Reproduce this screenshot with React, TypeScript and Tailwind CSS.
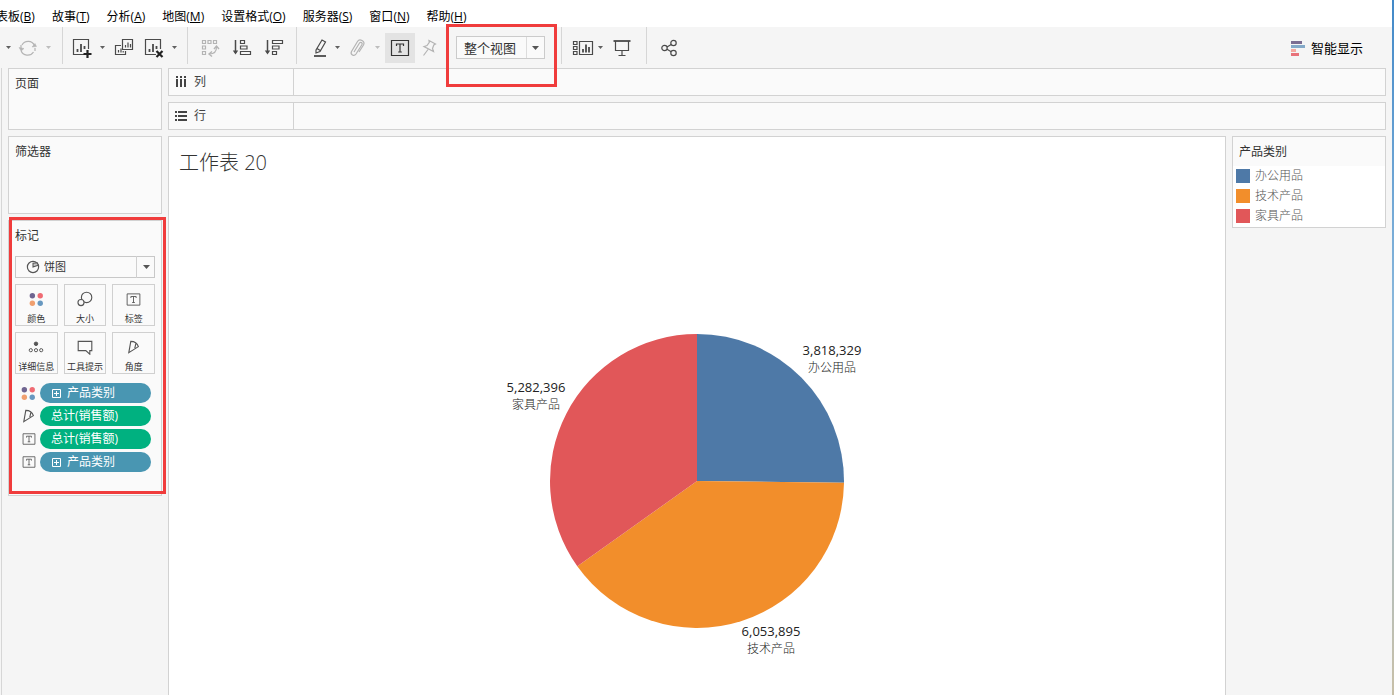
import type { ReactNode } from "react";

const menus = [
  { label: "表板", hotkey: "B" },
  { label: "故事", hotkey: "T" },
  { label: "分析", hotkey: "A" },
  { label: "地图", hotkey: "M" },
  { label: "设置格式", hotkey: "O" },
  { label: "服务器", hotkey: "S" },
  { label: "窗口", hotkey: "N" },
  { label: "帮助", hotkey: "H" },
];

const slices = [
  { name: "办公用品", value: 3818329, color: "#4e79a7", labelX: 352, labelY: 25 },
  { name: "技术产品", value: 6053895, color: "#f28e2b", labelX: 291, labelY: 306 },
  { name: "家具产品", value: 5282396, color: "#e15759", labelX: 56, labelY: 62 },
];

const CENTER_X = 217;
const CENTER_Y = 151;
const RADIUS = 147;

interface IconProps {
  children: ReactNode;
  className?: string;
}

function Icon({ children, className = "w-5 h-5" }: IconProps) {
  return (
    <svg
      viewBox="0 0 20 20"
      fill="none"
      stroke="currentColor"
      strokeWidth="1.2"
      className={`shrink-0 ${className}`}
      aria-hidden="true"
    >
      {children}
    </svg>
  );
}

interface ToolButtonProps {
  label: string;
  children: ReactNode;
  faded?: boolean;
}

function ToolButton({ label, children, faded = false }: ToolButtonProps) {
  return (
    <button
      type="button"
      aria-label={label}
      className={`block ${faded ? "text-[#b4b4b4]" : "text-[#4a4a4a]"}`}
    >
      <Icon>{children}</Icon>
    </button>
  );
}

function Caret({ label, faded = false }: { label: string; faded?: boolean }) {
  return (
    <button
      type="button"
      aria-label={label}
      className={`flex w-3 h-5 items-center justify-center ${faded ? "text-[#bdbdbd]" : "text-[#606060]"}`}
    >
      <CaretGlyph className="w-[5px] h-[3px]" />
    </button>
  );
}

function CaretGlyph({ className }: { className: string }) {
  return (
    <svg viewBox="0 0 8 4" fill="currentColor" preserveAspectRatio="none" className={className} aria-hidden="true">
      <path d="M0 0h8L4 4z" />
    </svg>
  );
}

function Divider() {
  return <div className="w-px h-[37px] self-start bg-[#d6d6d6]" />;
}

function BoxedT({ className }: { className?: string }) {
  return (
    <Icon className={className}>
      <path d="M1.5 2.5h17v15h-17z" />
      <path d="M6.5 8V6h7v2M10 6v8M8.2 14h3.6" />
    </Icon>
  );
}

function ColorDots({ className }: { className?: string }) {
  return (
    <Icon className={className}>
      <g stroke="none">
        <circle cx="4.500" cy="5" r="3.600" fill="#6f6591" />
        <circle cx="15" cy="5" r="3.600" fill="#ef6b73" />
        <circle cx="4.500" cy="15" r="3.600" fill="#f0a070" />
        <circle cx="15" cy="15" r="3.600" fill="#6798c0" />
      </g>
    </Icon>
  );
}

function AngleMark({ className }: { className?: string }) {
  return (
    <Icon className={className}>
      <path d="M6 3C10 3 14 5 15.500 9.500L3.500 17ZM12.500 5l-1.500 6.500" strokeWidth="1.400" />
    </Icon>
  );
}

function MenuBar() {
  return (
    <nav className="flex h-[27px] items-end gap-[17px] overflow-hidden bg-white text-xs leading-5 text-black">
      {menus.map((menu, i) => (
        <button key={menu.hotkey} type="button" className={`shrink-0 ${i === 0 ? "-ml-1" : ""}`}>
          {menu.label}(<u>{menu.hotkey}</u>)
        </button>
      ))}
    </nav>
  );
}

function Toolbar() {
  return (
    <div className="flex h-[41px] items-center">
      <div className="flex items-center gap-1 pl-0.5 pr-2">
        <Caret label="更多" />
        <ToolButton label="刷新" faded>
          <path d="M4 7a7 7 0 0 1 12.5.5M17 10v3M15.5 14A7 7 0 0 1 3 12.500M3 10V7" />
          <path d="M1 9.500 3.200 13 6 10.500zM14 9l4.500-.5-1.500-3z" fill="currentColor" strokeWidth=".5" />
        </ToolButton>
        <Caret label="刷新选项" faded />
      </div>
      <Divider />
      <div className="flex items-center pl-[9px] pr-[7px]">
        <ToolButton label="新建工作表">
          <path d="M12 16.500H1.500v-15h15V11" />
          <path d="M5.500 14v-3M9 14V6M12.500 11V8" strokeWidth="1.800" />
          <path d="M15.500 12v8M11.500 16h8" strokeWidth="2.200" stroke="#222" />
        </ToolButton>
        <div className="pl-1 pr-1.5">
          <Caret label="新建选项" />
        </div>
        <ToolButton label="复制">
          <path d="M8.500 1.500h10v10h-10zM7 7.500H1.500v9h10V13" />
          <path d="M11.500 9.500V7M14 9.500V4.500M16.500 9.500V6M4.500 14.500V12M7 14.500V10.500M9.200 14.500V13" />
        </ToolButton>
        <div className="pl-2.5 pr-1">
          <ToolButton label="清除工作表">
            <path d="M12 16.500H1.500v-15h15V11" />
            <path d="M5.500 14v-3M9 14V6M12.500 11V8" strokeWidth="1.800" />
            <path d="m12.500 13 6 6M18.500 13l-6 6" strokeWidth="2.200" stroke="#222" />
          </ToolButton>
        </div>
        <Caret label="清除选项" />
      </div>
      <Divider />
      <div className="flex items-center gap-3 px-3">
        <ToolButton label="交换行和列" faded>
          <path d="M2.500 2.500h3v3h-3zM8 2.500h3v3H8zM13.500 2.500h3v3h-3zM2.500 8h3v3h-3zM2.500 13.500h3v3h-3z" />
          <path d="M16.500 9c0 4.500-2.500 7-7 7" />
          <path d="m14 11 2.500-3 2.500 3M12 13.500 9 16l3 2.500" strokeWidth="1.400" />
        </ToolButton>
        <ToolButton label="升序排序">
          <path d="M3.500 2v13" strokeWidth="1.500" />
          <path d="M.800 12.500h5.400L3.500 16.500z" fill="currentColor" stroke="none" />
          <path d="M8.500 2.500h4v3h-4zM8.500 8h6.500v3H8.500zM8.500 13.500h10v3h-10z" />
        </ToolButton>
        <ToolButton label="降序排序">
          <path d="M3.500 2v13" strokeWidth="1.500" />
          <path d="M.800 12.500h5.400L3.500 16.500z" fill="currentColor" stroke="none" />
          <path d="M8.500 2.500h10v3h-10zM8.500 8H15v3H8.500zM8.500 13.500h4v3h-4z" />
        </ToolButton>
      </div>
      <Divider />
      <div className="flex items-center pl-[13px]">
        <ToolButton label="突出显示">
          <path d="m6 12 6-10 3.500 2L10 13.500l-4 1.500zM7 10.500l4 2.500" />
          <path d="M4 18h12" strokeWidth="1.800" />
        </ToolButton>
        <div className="pl-px pr-1">
          <Caret label="突出显示选项" />
        </div>
        <ToolButton label="组" faded>
          <path d="m7 14 5.500-9c1-1.500 3.500 0 2.500 1.500l-6 9.500c-2 3-6 .500-4.500-2.500L10.500 3.500c2-3.500 8-.500 6 3.500L12 14" />
        </ToolButton>
        <div className="pl-1 pr-0.5">
          <Caret label="组选项" faded />
        </div>
        <button
          type="button"
          aria-label="显示标记标签"
          className="flex w-[30px] h-[30px] items-center justify-center bg-[#e3e3e3] text-[#333]"
        >
          <BoxedT className="w-5 h-5" />
        </button>
        <div className="pl-1 pr-[17px]">
          <ToolButton label="固定" faded>
            <path d="m10 2.500 6.500 3.500-1.700 1-1.300 3.500 1 3L5 8.500l3-1 2.300-3.200zM9 11.500 4.500 17.500" />
          </ToolButton>
        </div>
      </div>
      <div className="relative w-[89px] h-[23px]">
        <select
          aria-label="适合"
          className="block w-full h-full appearance-none border border-[#cbcbcb] bg-[#fafafa] pl-[7px] text-[13px] leading-5 text-[#333]"
        >
          <option>整个视图</option>
        </select>
        <div className="pointer-events-none absolute inset-y-px right-px flex w-[18px] items-center justify-center border-l border-[#dcdcdc] text-[#555]">
          <CaretGlyph className="w-[7px] h-1" />
        </div>
        <div className="pointer-events-none absolute -left-2.5 -top-3 z-10 w-[111px] h-[63px] border-3 border-[#f03c3c]" />
      </div>
      <div className="flex self-stretch items-center pl-4">
        <Divider />
        <div className="flex items-center pl-2.5 pr-[14px]">
          <button type="button" aria-label="显示/隐藏卡" className="text-[#4a4a4a]">
            <svg
              viewBox="0 0 22 20"
              fill="none"
              stroke="currentColor"
              strokeWidth="1.200"
              className="w-[22px] h-5"
              aria-hidden="true"
            >
              <path d="M1.500 3.500h3.500v3H1.500zM1.500 8.500h3.500v3H1.500zM1.500 13.500h3.500v3H1.500zM7.500 3.500h13v13h-13z" />
              <path d="M11 14.500V11M14 14.500V6.500M17 14.500V9" strokeWidth="1.800" />
            </svg>
          </button>
          <div className="pr-1.5">
            <Caret label="卡选项" />
          </div>
          <ToolButton label="演示模式">
            <path d="M1.500 3h17" strokeWidth="1.800" />
            <path d="M3.500 3v9.500h13V3M10 12.500v5M6.500 17.500h7" />
          </ToolButton>
        </div>
        <Divider />
        <div className="flex items-center pl-3">
          <ToolButton label="共享">
            <circle cx="5.500" cy="10" r="2.700" />
            <circle cx="14.500" cy="5" r="2.700" />
            <circle cx="14.500" cy="15" r="2.700" />
            <path d="m8 9 4.200-2.500M8 11.200l4.200 2.500" />
          </ToolButton>
        </div>
      </div>
      <button type="button" className="ml-auto mr-[29px] flex items-center gap-[5px] text-[13px] leading-5 text-black">
        <svg viewBox="0 0 15 16" className="w-[15px] h-4" aria-hidden="true">
          <path d="M0 1h11v3H0z" fill="#7b6d92" />
          <path d="M0 5h14v3H0z" fill="#84a9c8" />
          <path d="M0 9h5v3H0z" fill="#f5a9a0" />
          <path d="M0 13h8v3H0z" fill="#e8727a" />
        </svg>
        智能显示
      </button>
    </div>
  );
}

function Card({ title, className = "" }: { title: string; className?: string }) {
  return (
    <section className={`border border-[#d2d2d2] bg-[#fafafa] px-1.5 py-[5px] ${className}`}>
      <h2 className="text-xs leading-5">{title}</h2>
    </section>
  );
}

function MarkButton({ label, children }: { label: string; children: ReactNode }) {
  return (
    <button
      type="button"
      className="flex h-[42px] flex-col items-center justify-between overflow-hidden border border-[#d0d0d0] pt-1.5 text-[9px] leading-[13px] whitespace-nowrap text-[#333]"
    >
      <span className="flex h-4 items-center text-[#555]">{children}</span>
      {label}
    </button>
  );
}

interface PillProps {
  icon: ReactNode;
  label: string;
  variant: "dimension" | "measure";
}

function Pill({ icon, label, variant }: PillProps) {
  return (
    <li className="flex items-center">
      <span className="flex w-[25px] justify-center pl-0.5 text-[#555]">{icon}</span>
      <button
        type="button"
        className={`flex h-5 w-[111px] items-center gap-[5px] rounded-full px-[11px] text-xs text-white ${
          variant === "dimension" ? "bg-[#4996b2]" : "bg-[#00b180]"
        }`}
      >
        {variant === "dimension" && (
          <svg viewBox="0 0 11 11" fill="none" stroke="currentColor" className="w-[11px] h-[11px]" aria-hidden="true">
            <path d="M1.500 1.500h8v8h-8zM5.500 3v5M3 5.500h5" />
          </svg>
        )}
        {label}
      </button>
    </li>
  );
}

function MarksCard() {
  return (
    <section className="relative h-[276px] border border-[#d2d2d2] bg-[#fafafa] px-1.5 pt-[5px]">
      <h2 className="text-xs leading-5">标记</h2>
      <div className="relative mt-2.5 h-[22px]">
        <select
          aria-label="标记类型"
          className="block w-full h-full appearance-none border border-[#c8c8c8] bg-[#fafafa] pl-7 text-[11px] leading-4 text-[#333]"
        >
          <option>饼图</option>
        </select>
        <div className="pointer-events-none absolute inset-y-0 left-[11px] flex items-center text-[#555]">
          <Icon className="w-[14px] h-[14px]">
            <circle cx="10" cy="10" r="8" strokeWidth="1.700" />
            <path d="M10 10V4.500l6-.5 1.500 3.500z" fill="#c4c4c4" strokeWidth="1.500" />
          </Icon>
        </div>
        <div className="pointer-events-none absolute inset-y-0 right-0 flex w-[19px] items-center justify-center border-l border-[#d0d0d0] text-[#555]">
          <CaretGlyph className="w-[7px] h-1" />
        </div>
      </div>
      <div className="mt-1.5 grid grid-cols-3 gap-1.5">
        <MarkButton label="颜色">
          <ColorDots className="w-[15px] h-[15px]" />
        </MarkButton>
        <MarkButton label="大小">
          <Icon className="w-4 h-4">
            <circle cx="12" cy="8" r="6.500" strokeWidth="1.400" />
            <circle cx="5" cy="14.500" r="3.800" fill="#fafafa" strokeWidth="1.400" />
          </Icon>
        </MarkButton>
        <MarkButton label="标签">
          <BoxedT className="w-[15px] h-[15px]" />
        </MarkButton>
        <MarkButton label="详细信息">
          <Icon className="w-4 h-4">
            <circle cx="10" cy="6" r="2.200" fill="currentColor" />
            <circle cx="3.500" cy="14" r="2" />
            <circle cx="10" cy="14" r="2" />
            <circle cx="16.500" cy="14" r="2" />
          </Icon>
        </MarkButton>
        <MarkButton label="工具提示">
          <Icon className="w-4 h-4">
            <path d="M1.500 3h17v11.500H16V19l-5-4.500H1.500z" strokeWidth="1.400" />
          </Icon>
        </MarkButton>
        <MarkButton label="角度">
          <AngleMark className="w-4 h-4" />
        </MarkButton>
      </div>
      <ul className="mt-[9px] flex flex-col gap-[3px]">
        <Pill icon={<ColorDots className="w-[15px] h-[15px]" />} label="产品类别" variant="dimension" />
        <Pill icon={<AngleMark className="w-4 h-4" />} label="总计(销售额)" variant="measure" />
        <Pill icon={<BoxedT className="w-[14px] h-[14px]" />} label="总计(销售额)" variant="measure" />
        <Pill icon={<BoxedT className="w-[14px] h-[14px]" />} label="产品类别" variant="dimension" />
      </ul>
      <div className="pointer-events-none absolute -top-1 left-0 z-10 w-[157px] h-[277px] border-3 border-[#f03c3c]" />
    </section>
  );
}

function Shelf({ label, children }: { label: string; children: ReactNode }) {
  return (
    <div className="flex h-7 border border-[#d2d2d2] bg-[#fafafa]">
      <div className="flex w-[125px] items-center gap-1.5 border-r border-[#d2d2d2] pl-1.5 text-xs text-[#444]">
        <svg viewBox="0 0 13 13" fill="currentColor" className="w-[13px] h-[13px]" aria-hidden="true">
          {children}
        </svg>
        {label}
      </div>
    </div>
  );
}

function PieChart() {
  const total = slices.reduce((sum, slice) => sum + slice.value, 0);
  const point = (fraction: number) => {
    const angle = fraction * 2 * Math.PI;
    return `${CENTER_X + RADIUS * Math.sin(angle)} ${CENTER_Y - RADIUS * Math.cos(angle)}`;
  };

  let start = 0;
  const paths = slices.map((slice) => {
    const end = start + slice.value / total;
    const d = `M${CENTER_X} ${CENTER_Y}L${point(start)}A${RADIUS} ${RADIUS} 0 0 1 ${point(end)}Z`;
    start = end;
    return <path key={slice.name} d={d} fill={slice.color} />;
  });

  return (
    <svg viewBox="0 0 434 340" className="w-[434px] h-[340px]" role="img" aria-label="产品类别 销售额">
      {paths}
      {slices.map((slice) => (
        <g key={slice.name} textAnchor="middle" className="fill-[#222]">
          <text x={slice.labelX} y={slice.labelY} className="text-[13px]">
            {slice.value.toLocaleString("en-US")}
          </text>
          <text x={slice.labelX} y={slice.labelY + 17} className="text-xs font-light">
            {slice.name}
          </text>
        </g>
      ))}
    </svg>
  );
}

export default function App() {
  return (
    <div className="flex min-h-screen bg-[#f5f5f5] font-['Open_Sans','Noto_Sans_CJK_SC',sans-serif] text-[#333]">
      <div className="flex min-w-0 flex-1 flex-col">
        <MenuBar />
        <Toolbar />
        <div className="ml-px flex flex-1 gap-1.5 border-l border-[#d6d6d6] pl-1.5 pr-1.5">
          <aside className="flex w-[154px] shrink-0 flex-col gap-1.5">
            <Card title="页面" className="h-[62px]" />
            <Card title="筛选器" className="h-[78px]" />
            <MarksCard />
          </aside>
          <div className="flex min-w-0 flex-1 flex-col gap-1.5">
            <Shelf label="列">
              <path d="M1 0h2v2H1zM5 0h2v2H5zM9 0h2v2H9zM1 3h2v8H1zM5 3h2v8H5zM9 3h2v8H9z" />
            </Shelf>
            <Shelf label="行">
              <path d="M0 1h2v2H0zM0 5h2v2H0zM0 9h2v2H0zM3 1h9v2H3zM3 5h9v2H3zM3 9h9v2H3z" />
            </Shelf>
            <div className="flex flex-1 items-start gap-1.5">
              <main className="min-w-0 flex-1 self-stretch border border-b-0 border-[#d2d2d2] bg-white">
                <h1 className="pl-2.5 pt-3 text-xl leading-7 font-light text-[#333]">工作表 20</h1>
                <div className="flex justify-center pt-[153px]">
                  <PieChart />
                </div>
              </main>
              <section className="w-[154px] shrink-0 border border-[#d2d2d2] bg-white">
                <h2 className="bg-[#fafafa] px-1.5 pt-[5px] pb-1 text-xs leading-5">产品类别</h2>
                <ul className="pb-px">
                  {slices.map((slice) => (
                    <li key={slice.name} className="flex h-5 items-center gap-[5px] pl-[3px] text-xs font-light text-[#555]">
                      <span className="w-3.5 h-3.5" style={{ backgroundColor: slice.color }} />
                      {slice.name}
                    </li>
                  ))}
                </ul>
              </section>
            </div>
          </div>
        </div>
      </div>
      <div className="w-0.5 bg-linear-to-b from-[#4289c8] via-[#8ab8dc] via-45% to-[#c8c0a8]" />
    </div>
  );
}
